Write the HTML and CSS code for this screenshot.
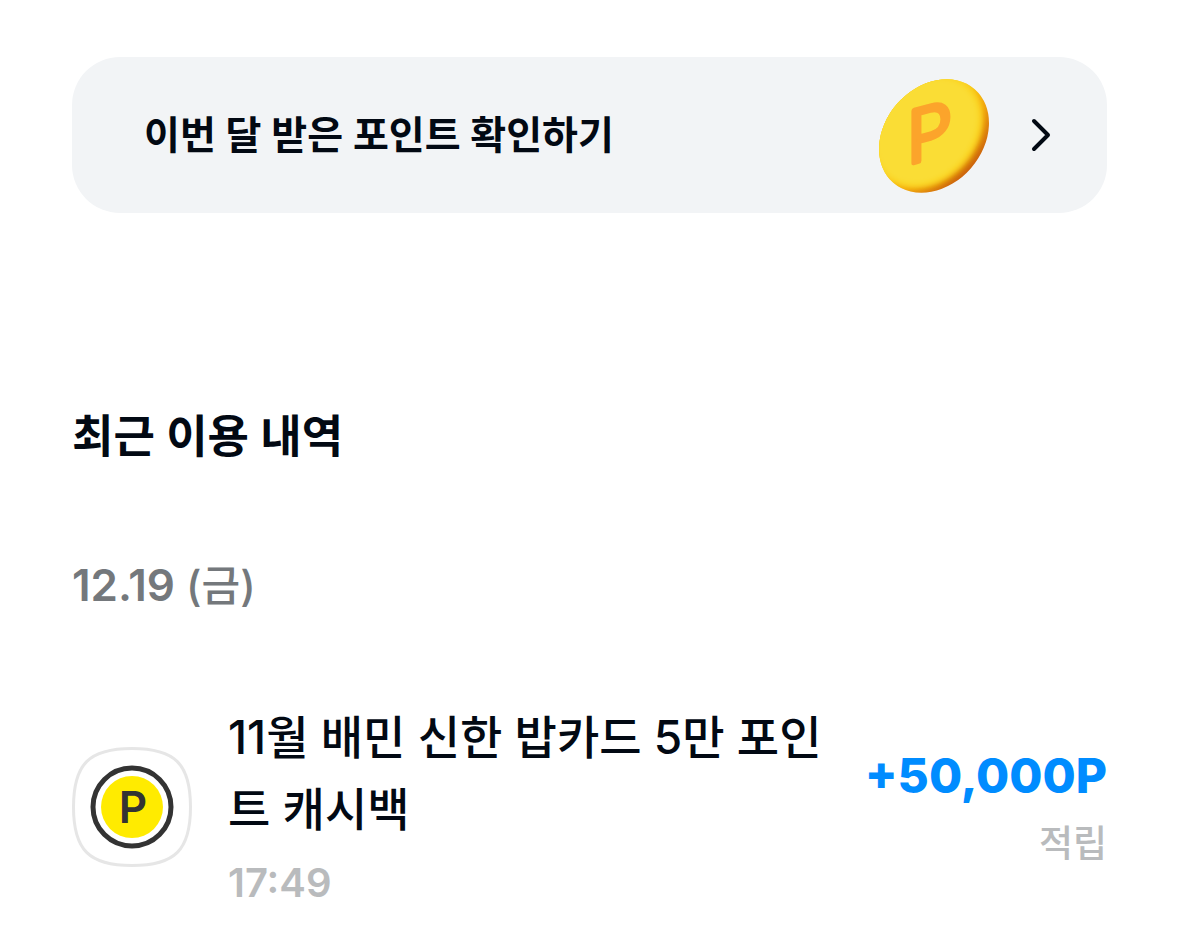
FILE: index.html
```html
<!DOCTYPE html>
<html lang="ko">

<head>
	<meta charset="UTF-8">
	<meta name="viewport" content="width=device-width, initial-scale=1.0">
	<title>포인트 이용 내역</title>
	<link rel="stylesheet" href="styles.css">
</head>

<body>
	<main>
		<a class="banner" href="#points">
			<span class="bannerText">이번 달 받은 포인트 확인하기</span>
			<svg class="coin" viewBox="0 0 112 116" aria-hidden="true">
				<defs>
					<linearGradient id="coinEdge" gradientUnits="userSpaceOnUse" x1="44" y1="46" x2="92" y2="90">
						<stop offset="0" stop-color="#fbd01a" />
						<stop offset=".5" stop-color="#f0a010" />
						<stop offset="1" stop-color="#cc640c" />
					</linearGradient>
					<clipPath id="coinShape">
						<ellipse rx="62" ry="49" transform="translate(55 59) rotate(-49)" />
					</clipPath>
					<filter id="soft" x="-20%" y="-20%" width="140%" height="140%">
						<feGaussianBlur stdDeviation="3" />
					</filter>
				</defs>
				<g clip-path="url(#coinShape)">
					<rect width="112" height="118" fill="url(#coinEdge)" />
					<ellipse rx="61" ry="48" transform="translate(50 55) rotate(-49)" fill="#fbcb0c"
						filter="url(#soft)" />
					<ellipse rx="60" ry="47" transform="translate(48 54) rotate(-49)" fill="#fadd35"
						filter="url(#soft)" />
				</g>
				<text class="coinLetter" x="28" y="82" transform="translate(0 13) skewY(-15)">P</text>
			</svg>
			<svg class="arrow" viewBox="0 0 24 36" aria-hidden="true">
				<path d="M4 4L18 18L4 32" />
			</svg>
		</a>

		<section class="history">
			<h2>최근 이용 내역</h2>
			<h3><span class="num">12.19</span> (금)</h3>
			<ul>
				<li>
					<svg class="badge" viewBox="0 0 120 120" aria-hidden="true">
						<path class="badgeFrame"
							d="M60 1.5C103 1.5 118.500 17 118.500 60C118.500 103 103 118.500 60 118.500C17 118.500 1.500 103 1.500 60C1.500 17 17 1.500 60 1.500Z" />
						<circle class="badgeRing" cx="60" cy="60" r="39" />
						<circle class="badgeFill" cx="60" cy="60" r="31" />
						<text class="badgeLetter" x="61" y="76">P</text>
					</svg>
					<div class="info">
						<p class="title">11월 배민 신한 밥카드 5만 포인트 캐시백</p>
						<time datetime="17:49">17:49</time>
					</div>
					<div class="amount">
						<strong>+50,000P</strong>
						<span>적립</span>
					</div>
				</li>
			</ul>
		</section>
	</main>
</body>

</html>
```
FILE: styles.css
```css
* {
	box-sizing: border-box;
}

body {
	margin: 0;
	font-family: Inter, "Noto Sans CJK KR", sans-serif;
	color: #020913;
	background-color: #fff;
}

main {
	padding: 57px 72px 36px;
}

h2,
h3,
p,
ul {
	margin: 0;
	padding: 0;
}

.banner {
	display: flex;
	align-items: center;
	padding: 20px 53px 20px 72px;
	border-radius: 48px;
	color: inherit;
	background-color: #f2f4f6;
	text-decoration: none;
}

.bannerText {
	flex: 1;
	font-size: 39px;
	font-weight: 600;
	line-height: 60px;
}

.coin {
	width: 112px;
	height: 116px;
	margin-right: 39px;
}

.coinLetter {
	font-size: 72px;
	font-weight: 300;
	fill: #fca42b;
	stroke: #fca42b;
	stroke-width: 5;
	stroke-linejoin: round;
}

.arrow {
	width: 24px;
	height: 36px;
}

.arrow path {
	fill: none;
	stroke: #020913;
	stroke-width: 4;
	stroke-linecap: round;
	stroke-linejoin: round;
}

.history {
	padding-top: 188px;
}

h2 {
	font-size: 45px;
	font-weight: 600;
	line-height: 72px;
}

h3 {
	margin-top: 82px;
	color: #74787c;
	font-size: 42px;
	font-weight: 500;
	line-height: 60px;
}

h3 .num {
	font-size: 44px;
	font-weight: 600;
}

li {
	display: flex;
	align-items: center;
	margin-top: 85px;
	list-style: none;
}

.badge {
	flex: none;
	width: 120px;
	height: 120px;
	margin-right: 36px;
}

.badgeFrame {
	fill: #fff;
	stroke: #e6e6e6;
	stroke-width: 3;
}

.badgeRing {
	fill: #fff;
	stroke: #333;
	stroke-width: 5;
}

.badgeFill {
	fill: #ffeb00;
}

.badgeLetter {
	fill: #333;
	font-size: 44px;
	font-weight: 600;
	text-anchor: middle;
}

.info {
	flex: 1;
}

.title {
	font-size: 46px;
	font-weight: 500;
	line-height: 72px;
}

time {
	display: block;
	margin-top: 8px;
	color: #b9bbbd;
	font-size: 40px;
	font-weight: 600;
	line-height: 60px;
}

.amount {
	display: flex;
	flex-direction: column;
	align-items: flex-end;
	gap: 2px;
	margin-left: 24px;
}

.amount strong {
	color: #008cff;
	font-size: 48px;
	font-weight: 800;
	line-height: 72px;
}

.amount span {
	color: #b9bbbd;
	font-size: 37px;
	font-weight: 500;
	line-height: 60px;
}
```
